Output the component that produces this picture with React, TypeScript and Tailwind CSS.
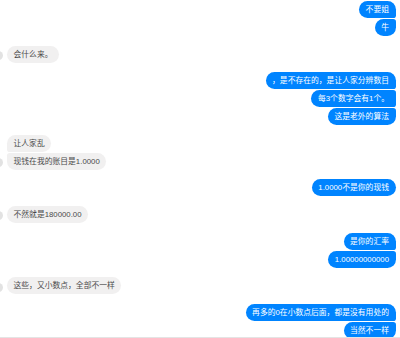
import React from 'react';

type Group = { me: boolean; lines: string[] };

const groups: Group[] = [
  { me: true, lines: ['不要姐', '牛'] },
  { me: false, lines: ['会什么来。'] },
  { me: true, lines: ['，是不存在的，是让人家分辨数目', '每3个数字会有1个。', '这是老外的算法'] },
  { me: false, lines: ['让人家乱', '现钱在我的账目是1.0000'] },
  { me: true, lines: ['1.0000不是你的现钱'] },
  { me: false, lines: ['不然就是180000.00'] },
  { me: true, lines: ['是你的汇率', '1.00000000000'] },
  { me: false, lines: ['这些，又小数点，全部不一样'] },
  { me: true, lines: ['再多的0在小数点后面，都是没有用处的', '当然不一样'] },
];

const cornerClass = (me: boolean, i: number, n: number) => {
  if (n === 1) return 'rounded-[9px]';
  const first = i === 0;
  const last = i === n - 1;
  if (me) {
    if (first) return 'rounded-l-[9px] rounded-tr-[9px] rounded-br-[3px]';
    if (last) return 'rounded-l-[9px] rounded-tr-[3px] rounded-br-[9px]';
    return 'rounded-l-[9px] rounded-r-[3px]';
  }
  if (first) return 'rounded-r-[9px] rounded-tl-[9px] rounded-bl-[3px]';
  if (last) return 'rounded-r-[9px] rounded-tl-[3px] rounded-bl-[9px]';
  return 'rounded-r-[9px] rounded-l-[3px]';
};

const Bubble = ({ text, me, corners }: { text: string; me: boolean; corners: string }) => (
  <div
    className={`h-[17px] px-[6.5px] text-[7.8px] leading-[17px] whitespace-nowrap ${corners} ${
      me ? 'bg-[#0084ff] text-white' : 'bg-[#f1f0f0] text-[#4b4b4b]'
    }`}
  >
    {text}
  </div>
);

export default function App() {
  return (
    <div
      className="w-[400px] h-[338px] overflow-hidden bg-white flex flex-col"
      style={{ fontFamily: '"Liberation Sans", "Noto Sans CJK SC", sans-serif' }}
    >
      <div className="flex-1 overflow-hidden flex flex-col gap-[9.6px] pt-[1px]">
        {groups.map((g, gi) => (
          <div key={gi} className={`flex flex-col gap-[1px] ${g.me ? 'items-end pr-[4.5px]' : 'items-start'}`}>
            {g.lines.map((line, i) => {
              const corners = cornerClass(g.me, i, g.lines.length);
              if (g.me) return <Bubble key={i} text={line} me corners={corners} />;
              const showAvatar = i === g.lines.length - 1;
              return (
                <div key={i} className="flex items-center">
                  <div className="w-[7px] flex items-center justify-start pt-[3px]">
                    {showAvatar && <div className="w-[9px] h-[9px] -ml-[6.5px] rounded-full bg-[#e2e2e2] shrink-0" />}
                  </div>
                  <Bubble text={line} me={false} corners={corners} />
                </div>
              );
            })}
          </div>
        ))}
      </div>
      <div className="h-[1px] bg-[#e4e4e4] shrink-0" />
    </div>
  );
}
